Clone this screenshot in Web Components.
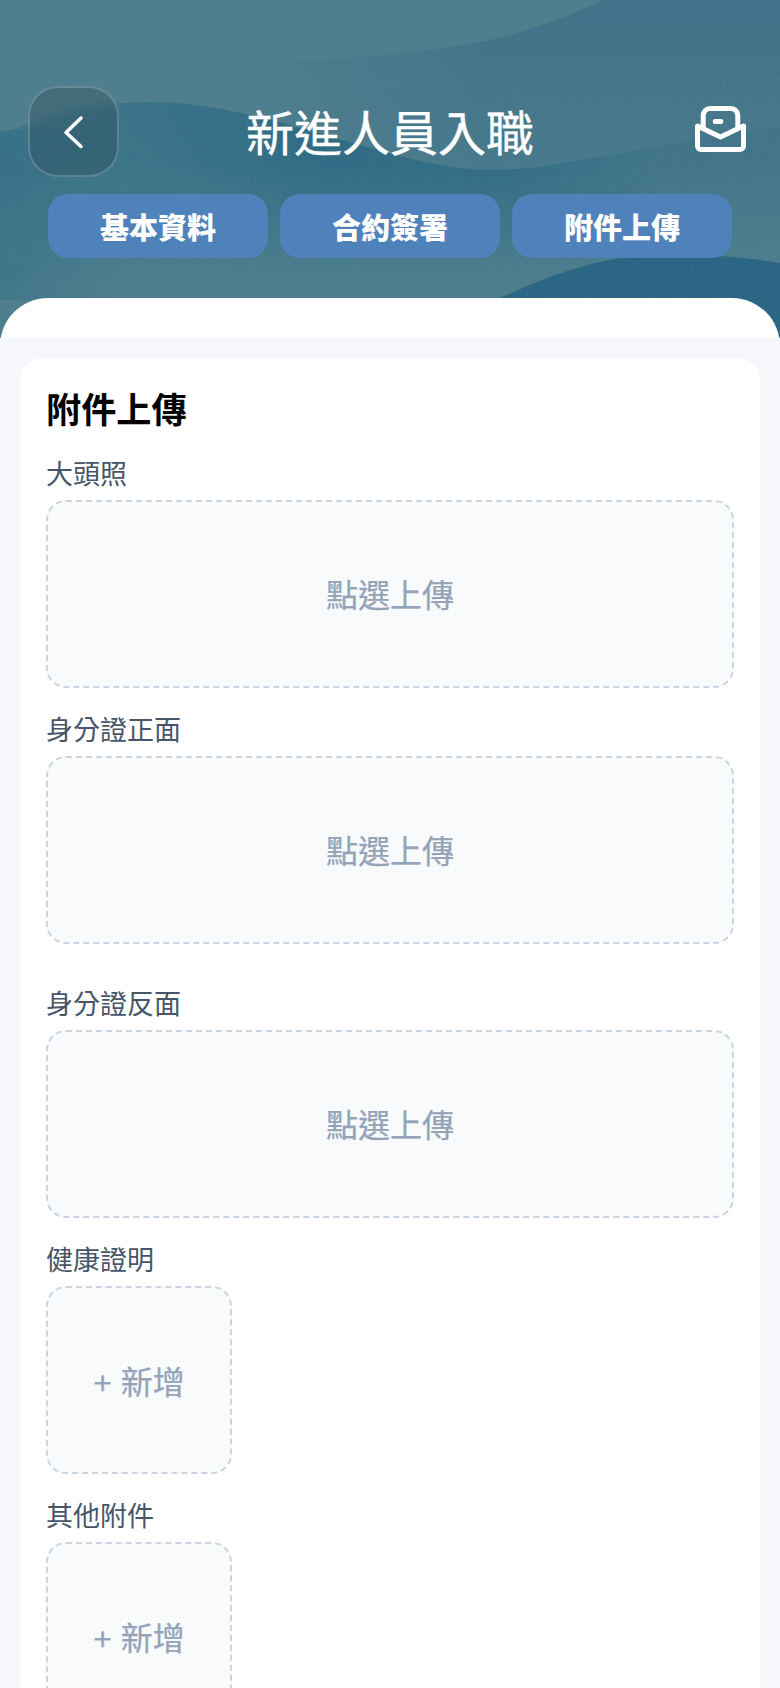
<!DOCTYPE html>
<html lang="zh-Hant">
<head>
<meta charset="utf-8">
<title>新進人員入職</title>
<style>
    html, body {
        margin: 0;
        height: 100%;
        overflow: hidden;
        background: #f5f7fa;
        font-family: "Noto Sans CJK TC", "Noto Sans", sans-serif;
    }
</style>
</head>
<body>
<onboard-page>
    <page-header slot="header" title="新進人員入職">
        <tab-button>基本資料</tab-button>
        <tab-button>合約簽署</tab-button>
        <tab-button>附件上傳</tab-button>
    </page-header>
    <upload-card heading="附件上傳">
        <upload-field label="大頭照">點選上傳</upload-field>
        <upload-field label="身分證正面">點選上傳</upload-field>
        <upload-field label="身分證反面" class="spaced">點選上傳</upload-field>
        <upload-field label="健康證明" small>+ 新增</upload-field>
        <upload-field label="其他附件" small>+ 新增</upload-field>
    </upload-card>
</onboard-page>

<script>
class OnboardPage extends HTMLElement {
    constructor() {
        super();
        this.attachShadow({ mode: "open" });
    }

    connectedCallback() {
        this.shadowRoot.innerHTML = `
            <style>
                :host {
                    display: block;
                }
                .panel {
                    position: relative;
                    margin-top: -48px;
                    padding-top: 40px;
                    background: #fff;
                    border-radius: 48px 48px 0 0;
                }
                .body {
                    padding: 20px 20px 40px;
                    background: #f5f7fa;
                }
            </style>
            <slot name="header"></slot>
            <div class="panel">
                <div class="body"><slot></slot></div>
            </div>
        `;
    }
}

class PageHeader extends HTMLElement {
    constructor() {
        super();
        this.attachShadow({ mode: "open" });
    }

    connectedCallback() {
        this.shadowRoot.innerHTML = `
            <style>
                :host {
                    display: block;
                    position: relative;
                    height: 346px;
                    overflow: hidden;
                    background: #4f7f8e;
                }
                .waves {
                    position: absolute;
                    inset: 0;
                }
                .content {
                    position: relative;
                    padding-top: 86px;
                }
                .top {
                    display: grid;
                    grid-template-columns: 1fr auto 1fr;
                    align-items: center;
                    padding: 0 28px;
                    height: 91px;
                }
                .back {
                    width: 91px;
                    height: 91px;
                    box-sizing: border-box;
                    display: flex;
                    align-items: center;
                    justify-content: center;
                    border: 2px solid rgba(255, 255, 255, 0.2);
                    border-radius: 30px;
                    background: rgba(44, 66, 78, 0.3);
                    backdrop-filter: blur(4px);
                }
                h1 {
                    margin: 0;
                    padding-bottom: 4px;
                    font-size: 48px;
                    font-weight: 400;
                    line-height: 60px;
                    color: #fff;
                    -webkit-text-stroke: 0.4px #fff;
                }
                .mail {
                    justify-self: end;
                    width: 63px;
                    display: flex;
                    justify-content: center;
                    margin-top: -6px;
                }
                .tabs {
                    display: grid;
                    grid-template-columns: repeat(3, 1fr);
                    gap: 12px;
                    margin: 17px 48px 0;
                }
            </style>
            <svg class="waves" width="780" height="346" viewBox="0 0 780 346">
                <defs>
                    <linearGradient id="midFade" gradientUnits="userSpaceOnUse" x1="0" y1="0" x2="0" y2="260">
                        <stop offset="0" stop-color="#42738a"/>
                        <stop offset="0.5" stop-color="#42738a" stop-opacity="0.6"/>
                        <stop offset="1" stop-color="#42738a" stop-opacity="0"/>
                    </linearGradient>
                    <linearGradient id="midSide" gradientUnits="userSpaceOnUse" x1="250" y1="0" x2="480" y2="0">
                        <stop offset="0" stop-color="#000"/>
                        <stop offset="1" stop-color="#fff"/>
                    </linearGradient>
                    <mask id="midMask" maskUnits="userSpaceOnUse" x="0" y="0" width="780" height="346">
                        <rect width="780" height="346" fill="url(#midSide)"/>
                    </mask>
                    <linearGradient id="bandFade" gradientUnits="userSpaceOnUse" x1="0" y1="100" x2="0" y2="285">
                        <stop offset="0" stop-color="#2c6a84"/>
                        <stop offset="0.35" stop-color="#2c6a84" stop-opacity="0.9"/>
                        <stop offset="1" stop-color="#2c6a84" stop-opacity="0"/>
                    </linearGradient>
                    <linearGradient id="bandSide" gradientUnits="userSpaceOnUse" x1="0" y1="0" x2="780" y2="0">
                        <stop offset="0" stop-color="#777"/>
                        <stop offset="0.2" stop-color="#999"/>
                        <stop offset="0.42" stop-color="#eee"/>
                        <stop offset="0.62" stop-color="#ddd"/>
                        <stop offset="0.85" stop-color="#3a3a3a"/>
                        <stop offset="1" stop-color="#303030"/>
                    </linearGradient>
                    <mask id="bandMask" maskUnits="userSpaceOnUse" x="0" y="0" width="780" height="346">
                        <rect width="780" height="346" fill="url(#bandSide)"/>
                    </mask>
                    <linearGradient id="leftEdge" x1="0" y1="0" x2="1" y2="0">
                        <stop offset="0" stop-color="#2c6a84" stop-opacity="0.4"/>
                        <stop offset="1" stop-color="#2c6a84" stop-opacity="0"/>
                    </linearGradient>
                    <filter id="grain" x="0" y="0" width="100%" height="100%">
                        <feTurbulence type="fractalNoise" baseFrequency="0.35" numOctaves="2" seed="4"/>
                        <feColorMatrix values="0 0 0 0 0.12  0 0 0 0 0.28  0 0 0 0 0.33  0 0 0 10 -6.600"/>
                    </filter>
                </defs>
                <path mask="url(#midMask)" fill="url(#midFade)" d="M200 60 C300 62 400 58 490 40 C530 30 570 16 603 0 H780 V260 H200 Z"/>
                <path mask="url(#bandMask)" fill="url(#bandFade)" d="M0 135 C40 118 90 102 150 102 C220 102 290 125 370 148 C420 163 460 170 495 170 C560 170 640 145 780 127 V300 H0 Z"/>
                <rect y="130" width="130" height="170" fill="url(#leftEdge)"/>
                <path fill="#2b6684" d="M500 298 C540 280 590 258 650 255 C690 253 740 256 780 263 V346 H500 Z"/>
                <rect y="70" width="780" height="230" filter="url(#grain)" opacity="0.22"/>
            </svg>
            <div class="content">
                <div class="top">
                    <div class="back">
                        <svg width="24" height="36" viewBox="0 0 24 36" fill="none">
                            <path d="M19 4 L4 18.500 L19 32.500" stroke="#fff" stroke-width="3.500" stroke-linecap="round" stroke-linejoin="round"/>
                        </svg>
                    </div>
                    <h1>${this.getAttribute("title")}</h1>
                    <div class="mail">
                        <svg width="51" height="46" viewBox="0 0 51 46" fill="none" stroke="#fff" stroke-width="5" stroke-linecap="round" stroke-linejoin="round">
                            <path d="M8.200 22 V9.500 A7 7 0 0 1 15.200 2.500 H35.800 A7 7 0 0 1 42.800 9.500 V21"/>
                            <path d="M2.500 20 V40 A3.500 3.500 0 0 0 6 43.500 H45 A3.500 3.500 0 0 0 48.500 40 V20 L25.500 31 Z"/>
                            <rect x="17.700" y="13" width="10.600" height="5" rx="2.500" fill="#fff" stroke="none"/>
                        </svg>
                    </div>
                </div>
                <div class="tabs"><slot></slot></div>
            </div>
        `;
    }
}

class TabButton extends HTMLElement {
    constructor() {
        super();
        this.attachShadow({ mode: "open" });
    }

    connectedCallback() {
        this.shadowRoot.innerHTML = `
            <style>
                :host {
                    display: flex;
                    align-items: center;
                    justify-content: center;
                    height: 64px;
                    border-radius: 20px;
                    background: #4f82ba;
                    color: #fff;
                    font-size: 29px;
                    font-weight: 900;
                }
            </style>
            <slot></slot>
        `;
    }
}

class UploadCard extends HTMLElement {
    constructor() {
        super();
        this.attachShadow({ mode: "open" });
    }

    connectedCallback() {
        this.shadowRoot.innerHTML = `
            <style>
                :host {
                    display: block;
                    padding: 25px 26px 40px;
                    background: #fff;
                    border-radius: 22px;
                }
                h2 {
                    margin: 0 0 19px;
                    font-size: 35.200px;
                    font-weight: 700;
                    line-height: 50px;
                    color: #000;
                }
                .fields {
                    display: flex;
                    flex-direction: column;
                    gap: 20px;
                }
            </style>
            <h2>${this.getAttribute("heading")}</h2>
            <div class="fields"><slot></slot></div>
        `;
    }
}

class UploadField extends HTMLElement {
    constructor() {
        super();
        this.attachShadow({ mode: "open" });
    }

    connectedCallback() {
        this.shadowRoot.innerHTML = `
            <style>
                :host {
                    display: block;
                }
                :host(.spaced) {
                    margin-top: 18px;
                }
                .label {
                    font-size: 27px;
                    line-height: 41px;
                    color: #475569;
                    margin-bottom: 7px;
                }
                .box {
                    height: 188px;
                    box-sizing: border-box;
                    padding-bottom: 2px;
                    display: flex;
                    align-items: center;
                    justify-content: center;
                    border: 2px dashed #cbd5e1;
                    border-radius: 20px;
                    background: #f8fafc;
                    color: #94a3b8;
                    font-family: "Liberation Sans", "Noto Sans CJK TC", sans-serif;
                    font-size: 32px;
                    -webkit-text-stroke: 0.25px #94a3b8;
                }
                :host([small]) .box {
                    width: 186px;
                    padding-bottom: 0;
                }
            </style>
            <div class="label">${this.getAttribute("label")}</div>
            <div class="box"><slot></slot></div>
        `;
    }
}

customElements.define("onboard-page", OnboardPage);
customElements.define("page-header", PageHeader);
customElements.define("tab-button", TabButton);
customElements.define("upload-card", UploadCard);
customElements.define("upload-field", UploadField);
</script>
</body>
</html>
